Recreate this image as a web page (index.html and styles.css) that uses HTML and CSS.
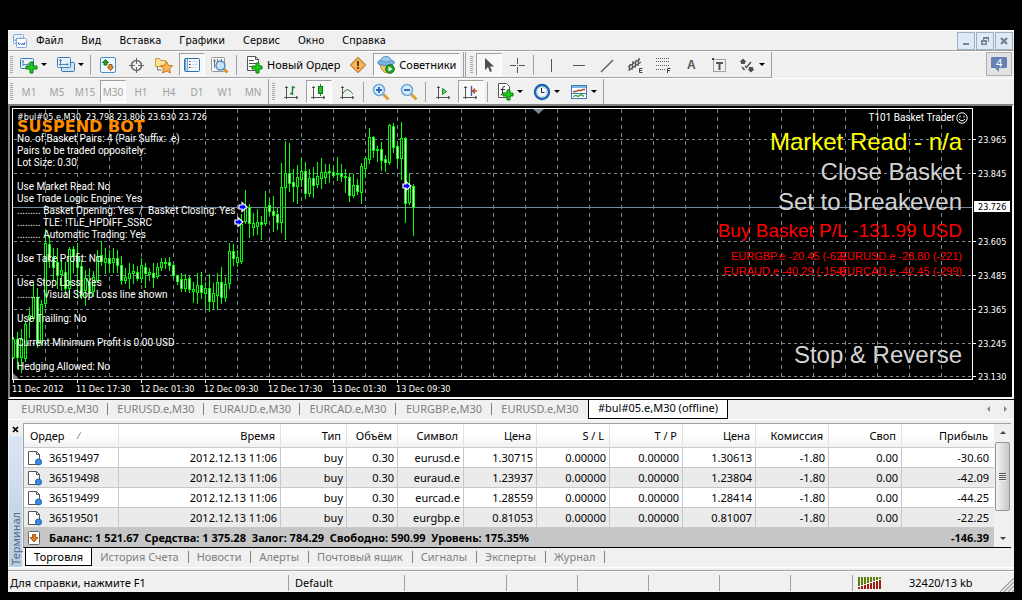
FILE: index.html
```html
<!DOCTYPE html>
<html lang="ru">
<head>
<meta charset="utf-8">
<title>#bul#05.e,M30 (offline)</title>
<link rel="stylesheet" href="styles.css">
</head>
<body>
<div class="app">
  <header class="menubar">
    <svg class="logo" width="16" height="16" viewBox="0 0 16 16"><rect x="1.500" y="1.500" width="10" height="9" rx="1" fill="#e8f2ff" stroke="#7fa6dd"/><path d="M3 8l2-3 2 2 2-3" fill="none" stroke="#4d86d0"/><rect x="4.500" y="5.500" width="10" height="9" rx="1" fill="#fff" stroke="#7fa6dd"/><path d="M6 9l1 3 1.500-2 1.500 2 1-2 1 2 1-3" fill="none" stroke="#4d86d0"/></svg>
    <nav class="menu">
      <button>Файл</button><button>Вид</button><button>Вставка</button><button>Графики</button><button>Сервис</button><button>Окно</button><button>Справка</button>
    </nav>
    <div class="winbtns">
      <button aria-label="Свернуть"><svg width="12" height="12" viewBox="0 0 12 12"><path d="M3 8h6v2H3z" fill="#75869b"/></svg></button>
      <button aria-label="Восстановить"><svg width="12" height="12" viewBox="0 0 12 12"><path d="M4 2h6v5H9V4H5v1H4z" fill="#75869b"/><path d="M2 5h6v5H2zM3.500 7v1.500h3V7z" fill="#75869b" fill-rule="evenodd"/></svg></button>
      <button aria-label="Закрыть"><svg width="12" height="12" viewBox="0 0 12 12"><path d="M3 3l6 6M9 3l-6 6" stroke="#75869b" stroke-width="2.400"/></svg></button>
    </div>
  </header>

  <div class="toolrow">
    <div class="toolbar">
      <i class="grip"></i>
      <button class="tb drop" aria-label="Новый график"><svg width="20" height="20" viewBox="0 0 20 20"><rect x="1.500" y="3.500" width="13" height="10" rx="1" fill="#e6f2fb" stroke="#3d7ab5"/><path d="M4 5v6M3 6.500h2M4 9.500h6M9 8l1.500 1.500" fill="none" stroke="#5a87ad"/><path d="M11 7h3v4h4v3h-4v4h-3v-4H7v-3h4z" fill="#1fd01f" stroke="#087d08"/></svg></button>
      <button class="tb drop" aria-label="Профили"><svg width="20" height="20" viewBox="0 0 20 20"><rect x="5.500" y="7.500" width="13" height="9" rx="1" fill="#cfe3f3" stroke="#3d7ab5"/><rect x="1.500" y="2.500" width="13" height="10" rx="1" fill="#e6f2fb" stroke="#3d7ab5"/><path d="M4.500 4v7M3 5.500h3M3 9.500h9M10.500 8l1.500 1.500-1.500 1.500" fill="none" stroke="#5a87ad"/></svg></button>
      <i class="sep"></i>
      <button class="tb" aria-label="Обзор рынка"><svg width="20" height="20" viewBox="0 0 20 20"><rect x="2.500" y="2.500" width="15" height="15" rx="1.500" fill="#f3f9fd" stroke="#4a90c8"/><path d="M7.500 4.500l3 3H9v2.500H6V7.500H4.500z" fill="#2aa32a" stroke="#157015"/><path d="M11 9.500h3v2.500h1.500l-3 3.500-3-3.500H11z" fill="#e8912d" stroke="#9b5a10"/></svg></button>
      <button class="tb" aria-label="Окно данных"><svg width="20" height="20" viewBox="0 0 20 20"><circle cx="10.500" cy="10.500" r="5" fill="none" stroke="#666" stroke-width="1.600"/><path d="M10.500 3v6M10.500 12v6M3 10.500h6M12 10.500h6" stroke="#666"/></svg></button>
      <button class="tb" aria-label="Избранное"><svg width="20" height="20" viewBox="0 0 20 20"><path d="M1.500 3.500h4l1 2h5v6h-10z" fill="#fbe39a" stroke="#c99a35"/><path d="M3.500 12v3h4" fill="none" stroke="#777"/><path d="M12.500 6.500l1.900 3.800 4.200.500-3 2.900.800 4.300-3.900-2-3.900 2 .800-4.300-3-2.900 4.200-.500z" fill="#f9b556" stroke="#c9781c"/></svg></button>
      <button class="tb on" aria-label="Терминал"><svg width="20" height="20" viewBox="0 0 20 20"><rect x="2.500" y="3.500" width="15" height="13" rx="1" fill="#f4f9fd" stroke="#2e6fae"/><path d="M3 4h3v12H3z" fill="#6aa5dc"/><path d="M4.500 4v12" stroke="#cde3f6"/><path d="M7 6.500h1.500M7 9.500h1.500M7 12.500h1.500" stroke="#333"/><path d="M7 6.500h1" stroke="#d22"/><path d="M10 6.500h6M10 9.500h6M10 12.500h6" stroke="#d3e2ee"/></svg></button>
      <button class="tb" aria-label="Тестер стратегий"><svg width="20" height="20" viewBox="0 0 20 20"><rect x="1.500" y="2.500" width="13" height="14" rx="1" fill="#f7f7f7" stroke="#999"/><path d="M4.500 4v9M7.500 4v4M11.500 4v5M3 6h3" stroke="#777"/><path d="M13.500 13.500l4 4" stroke="#d99330" stroke-width="3"/><circle cx="10.500" cy="10.500" r="4.500" fill="#c4def5" fill-opacity=".9" stroke="#4b8cc8" stroke-width="1.400"/></svg></button>
      <i class="sep"></i>
      <button class="tb text"><svg width="20" height="20" viewBox="0 0 20 20"><path d="M3.500 1.500h8l3 3v11h-11z" fill="#fff" stroke="#555"/><path d="M11.500 1.500v3h3M5 5.500h5M5 8.500h7M5 11.500h4" fill="none" stroke="#555"/><path d="M12 8h3v3h3v3h-3v4h-3v-4H8v-3h4z" fill="#1fd01f" stroke="#087d08"/></svg><span>Новый Ордер</span></button>
      <button class="tb" aria-label="MetaEditor"><svg width="20" height="20" viewBox="0 0 20 20"><path d="M10 2.500l7.500 7.500-7.500 7.500L2.500 10z" fill="#f6b45c" stroke="#c98a3c" stroke-width="1.300" stroke-linejoin="round"/><path d="M9 6h2v5H9zM9 12h2v2H9z" fill="#6b3a08"/></svg></button>
      <button class="tb text on"><svg width="20" height="20" viewBox="0 0 20 20"><path d="M4 9q1 8 7 9l5-4V8z" fill="#f3c56a" stroke="#b98526"/><ellipse cx="10" cy="7.500" rx="8.500" ry="3" fill="#7db4e6" stroke="#4a86c0"/><path d="M5 6q0-4.500 5-4.500T15 6q-5 2-10 0z" fill="#9cc8f0" stroke="#4a86c0" stroke-width=".8"/><circle cx="14" cy="14" r="4.300" fill="#1fa81f" stroke="#0c730c"/><path d="M12.500 11.500l4 2.500-4 2.500z" fill="#fff"/></svg><span>Советники</span></button>
      <i class="edge"></i>
      <i class="grip"></i>
      <button class="tb on" aria-label="Курсор"><svg width="20" height="20" viewBox="0 0 20 20"><path d="M6 3v12l3-3 2 5 2-1-2-4.500h4z" fill="#4d4d4d"/></svg></button>
      <button class="tb" aria-label="Перекрестие"><svg width="20" height="20" viewBox="0 0 20 20"><path d="M10.500 3v6M10.500 12v6M3 10.500h6M12 10.500h6M10 10.500h1" stroke="#555"/></svg></button>
      <i class="sep"></i>
      <button class="tb" aria-label="Вертикальная линия"><svg width="20" height="20" viewBox="0 0 20 20"><path d="M10.500 4v13" stroke="#555"/></svg></button>
      <button class="tb" aria-label="Горизонтальная линия"><svg width="20" height="20" viewBox="0 0 20 20"><path d="M4 10.500h12" stroke="#555"/></svg></button>
      <button class="tb" aria-label="Трендовая линия"><svg width="20" height="20" viewBox="0 0 20 20"><path d="M4 17L16 5" stroke="#555" stroke-width="1.200"/></svg></button>
      <button class="tb" aria-label="Канал"><svg width="20" height="20" viewBox="0 0 20 20"><path d="M3 12L15 4M4 15L16 7M5 9l-1 7M8 6l-1 9M11 5l-1 8M14 3l-1 8" stroke="#555" stroke-width="1.200"/><path d="M17.500 13.500h-3v4h3M14.500 15.500h2.500" fill="none" stroke="#444"/></svg></button>
      <button class="tb" aria-label="Фибоначчи"><svg width="20" height="20" viewBox="0 0 20 20"><path d="M3 3.500h14M3 6.500h14M3 10.500h14M3 14.500h9" stroke="#555" stroke-dasharray="1 1"/><path d="M14.500 18v-4.500h3M14.500 15.500h2.500" fill="none" stroke="#444"/></svg></button>
      <button class="tb glyph" aria-label="Текст">A</button>
      <button class="tb" aria-label="Метка"><svg width="20" height="20" viewBox="0 0 20 20"><rect x="4.500" y="4.500" width="12" height="12" fill="none" stroke="#555" stroke-dasharray="1 1"/><path d="M7 8h7M10.500 8v7" stroke="#555" stroke-width="2"/><path d="M3 3h2v2H3z" fill="#444"/></svg></button>
      <button class="tb drop" aria-label="Стрелки"><svg width="20" height="20" viewBox="0 0 20 20"><path d="M6 3.500L9.500 7H8v2H4V7H2.500zM14 17.500L10.500 14H12v-2h4v2h1.500z" fill="#4d4d4d"/><path d="M5 12l2.500 3M8 11l1.500 1.500L14 7" fill="none" stroke="#4d4d4d" stroke-width="1.400"/></svg></button>
    </div>
    <button class="chat" aria-label="Сообщения: 4"><svg width="18" height="18" viewBox="0 0 18 18"><path d="M1 3q0-1 1-1h14q1 0 1 1v9q0 1-1 1H9v4l-4-4H2q-1 0-1-1z" fill="#6680b3"/></svg><span>4</span></button>
  </div>

  <div class="toolrow second">
    <div class="toolbar">
      <i class="grip"></i>
      <button class="tb tf">M1</button><button class="tb tf">M5</button><button class="tb tf">M15</button><button class="tb tf on">M30</button><button class="tb tf">H1</button><button class="tb tf">H4</button><button class="tb tf">D1</button><button class="tb tf">W1</button><button class="tb tf">MN</button>
      <i class="edge"></i>
      <i class="grip"></i>
      <button class="tb" aria-label="Бары"><svg width="20" height="20" viewBox="0 0 20 20"><path d="M5.500 4v13M3 15.500h14M4 5.500h3M15 14l2 1.500-2 1.500" fill="none" stroke="#555"/><path d="M11.500 4v9M9 11.500h2.500M11.500 5.500H14" stroke="#168a2a" stroke-width="1.400"/></svg></button>
      <button class="tb on" aria-label="Свечи"><svg width="20" height="20" viewBox="0 0 20 20"><path d="M4.500 4v13M2 15.500h14M3 5.500h3M14 14l2 1.500-2 1.500" fill="none" stroke="#555"/><path d="M11.500 2v12" stroke="#168a2a"/><rect x="9.500" y="4.500" width="4" height="7" fill="#24c024" stroke="#0b7a1a"/></svg></button>
      <button class="tb" aria-label="Линия"><svg width="20" height="20" viewBox="0 0 20 20"><path d="M5.500 4v13M3 15.500h14M4 5.500h3M15 14l2 1.500-2 1.500" fill="none" stroke="#555"/><path d="M5 13q4-8 8-4l3 3" fill="none" stroke="#3d7f4c"/></svg></button>
      <i class="sep"></i>
      <button class="tb" aria-label="Увеличить"><svg width="20" height="20" viewBox="0 0 20 20"><path d="M12 12l5.500 5.500" stroke="#d9a13a" stroke-width="3"/><circle cx="8" cy="8" r="5.500" fill="#d6ebfb" stroke="#6aa8e0" stroke-width="1.500"/><path d="M5 8h6M8 5v6" stroke="#2b66b0" stroke-width="1.800"/></svg></button>
      <button class="tb" aria-label="Уменьшить"><svg width="20" height="20" viewBox="0 0 20 20"><path d="M12 12l5.500 5.500" stroke="#d9a13a" stroke-width="3"/><circle cx="8" cy="8" r="5.500" fill="#d6ebfb" stroke="#6aa8e0" stroke-width="1.500"/><path d="M5 8h6" stroke="#2b66b0" stroke-width="1.800"/></svg></button>
      <i class="sep"></i>
      <button class="tb" aria-label="Автопрокрутка"><svg width="20" height="20" viewBox="0 0 20 20"><path d="M5.500 4v13M3 15.500h14M4 5.500h3M15 14l2 1.500-2 1.500" fill="none" stroke="#555"/><path d="M9.500 6.500l4 3-4 3z" fill="#6cd06c" stroke="#168a2a"/></svg></button>
      <button class="tb on" aria-label="Сдвиг графика"><svg width="20" height="20" viewBox="0 0 20 20"><path d="M4.500 4v13M2 15.500h14M3 5.500h3M14 14l2 1.500-2 1.500" fill="none" stroke="#555"/><path d="M10.500 4v10" stroke="#2b66b0" stroke-width="1.400"/><path d="M16 9H12M14 6.500L11.500 9l2.500 2.500" fill="none" stroke="#c4471c" stroke-width="1.300"/></svg></button>
      <i class="sep"></i>
      <button class="tb drop" aria-label="Индикаторы"><svg width="20" height="20" viewBox="0 0 20 20"><path d="M3.500 1.500h8l3 3v11h-11z" fill="#fff" stroke="#555"/><path d="M10 4.500Q7.500 4 7.500 7v4q0 2-2 2M5.500 7.500H10" fill="none" stroke="#333"/><path d="M12 8h3v3h3v3h-3v4h-3v-4H8v-3h4z" fill="#1fd01f" stroke="#087d08"/></svg></button>
      <button class="tb drop" aria-label="Периоды"><svg width="20" height="20" viewBox="0 0 20 20"><circle cx="10" cy="10" r="7" fill="#f3f9ff" stroke="#1e62b0" stroke-width="2.400"/><circle cx="10" cy="10" r="4.800" fill="none" stroke="#89a" stroke-dasharray="1 1.500"/><path d="M9.500 6v4.500h3" fill="none" stroke="#222"/></svg></button>
      <button class="tb drop" aria-label="Шаблоны"><svg width="20" height="20" viewBox="0 0 20 20"><rect x="2.500" y="3.500" width="15" height="13" fill="#fff" stroke="#3d7ab5"/><path d="M3 4h14v2H3z" fill="#7fb2e0"/><path d="M3 11.500h14" stroke="#3d7ab5"/><path d="M4 9.500h3l2-1h3l2-1h2" fill="none" stroke="#a0441c" stroke-width="1.300"/><path d="M4 14.500l3-1 2 1 3-2 3 2" fill="none" stroke="#1f9a2f" stroke-width="1.300"/></svg></button>
    </div>
  </div>

  <main class="chart">
    <svg id="plot" class="plot" viewBox="10 106 1002 291" preserveAspectRatio="xMinYMin meet"></svg>
    <div class="overlay">
      <div class="info">
        <div class="quote">#bul#05.e,M30  23.798 23.806 23.630 23.726</div>
        <div class="bot">SUSPEND BOT</div>
        <pre class="comment">No. of Basket Pairs: 4 (Pair Suffix: .e)
Pairs to be traded oppositely:
Lot Size: 0.30

Use Market Read: No
Use Trade Logic Engine: Yes
......... Basket Opening: Yes  /  Basket Closing: Yes
......... TLE: !TLE_HPDIFF_SSRC
......... Automatic Trading: Yes

Use Take Profit: No

Use Stop Loss: Yes
......... Visual Stop Loss line shown

Use Trailing: No

Current Minimum Profit is 0.00 USD

Hedging Allowed: No</pre>
      </div>
      <div class="actions">
        <div class="expert">T101 Basket Trader<svg width="12" height="12" viewBox="0 0 12 12"><circle cx="6" cy="6" r="5.200" fill="none" stroke="#fff"/><path d="M4 3.500v2M8 3.500v2M3 7q3 3.500 6 0" fill="none" stroke="#fff"/></svg></div>
        <div class="big yellow">Market Read - n/a</div>
        <div class="big">Close Basket</div>
        <div class="big">Set to Breakeven</div>
        <div class="pl">Buy Basket P/L -131.99 USD</div>
        <div class="pairs"><span class="lead">EURGBP.e -20.45 (-62)</span><span>EURUSD.e -28.80 (-221)</span></div>
        <div class="pairs"><span class="lead">EURAUD.e -40.29 (-154)</span><span>EURCAD.e -42.45 (-299)</span></div>
        <div class="big reverse">Stop &amp; Reverse</div>
      </div>
    </div>
  </main>

  <div class="charttabs">
    <button>EURUSD.e,M30</button><button>EURUSD.e,M30</button><button>EURAUD.e,M30</button><button>EURCAD.e,M30</button><button>EURGBP.e,M30</button><button>EURUSD.e,M30</button><button class="active">#bul#05.e,M30 (offline)</button>
    <svg class="scroll" width="24" height="8" viewBox="0 0 24 8"><path d="M4 1v6L1 4zM18 1v6l3-3z" fill="#8a8a8a"/></svg>
  </div>

  <section class="terminal">
    <aside class="side">
      <button class="close" aria-label="Закрыть терминал"><svg width="7" height="7" viewBox="0 0 7 7"><path d="M1 1l5 5M6 1L1 6" stroke="#000" stroke-width="1.700"/></svg></button>
      <div class="caption"><span>Терминал</span></div>
    </aside>
    <div class="panel">
      <div class="tablewrap">
        <table class="orders">
          <colgroup><col class="c-order"><col class="c-time"><col class="c-sym"><col class="c-vol"><col class="c-sym"><col class="c-num"><col class="c-num"><col class="c-num"><col class="c-num"><col class="c-num"><col class="c-num"><col></colgroup>
          <thead><tr><th>Ордер<svg class="sort" width="10" height="8" viewBox="0 0 10 8"><path d="M1 7L5 0" stroke="#888"/><path d="M5 0l4 7.500H1" fill="none" stroke="#fff"/></svg></th><th>Время</th><th>Тип</th><th>Объём</th><th>Символ</th><th>Цена</th><th>S / L</th><th>T / P</th><th>Цена</th><th>Комиссия</th><th>Своп</th><th>Прибыль</th></tr></thead>
          <tbody>
            <tr><td><svg class="doc" width="16" height="16" viewBox="0 0 16 16"><path d="M1.500 1.500h8l3 3v10h-11z" fill="#fff" stroke="#555"/><path d="M9.500 1.500v3h3" fill="none" stroke="#555"/><circle cx="11.500" cy="12" r="3" fill="#3b8ee0" stroke="#1c5ea8"/></svg>36519497</td><td>2012.12.13 11:06</td><td>buy</td><td>0.30</td><td>eurusd.e</td><td>1.30715</td><td>0.00000</td><td>0.00000</td><td>1.30613</td><td>-1.80</td><td>0.00</td><td>-30.60</td></tr>
            <tr><td><svg class="doc" width="16" height="16" viewBox="0 0 16 16"><path d="M1.500 1.500h8l3 3v10h-11z" fill="#fff" stroke="#555"/><path d="M9.500 1.500v3h3" fill="none" stroke="#555"/><circle cx="11.500" cy="12" r="3" fill="#3b8ee0" stroke="#1c5ea8"/></svg>36519498</td><td>2012.12.13 11:06</td><td>buy</td><td>0.30</td><td>euraud.e</td><td>1.23937</td><td>0.00000</td><td>0.00000</td><td>1.23804</td><td>-1.80</td><td>0.00</td><td>-42.09</td></tr>
            <tr><td><svg class="doc" width="16" height="16" viewBox="0 0 16 16"><path d="M1.500 1.500h8l3 3v10h-11z" fill="#fff" stroke="#555"/><path d="M9.500 1.500v3h3" fill="none" stroke="#555"/><circle cx="11.500" cy="12" r="3" fill="#3b8ee0" stroke="#1c5ea8"/></svg>36519499</td><td>2012.12.13 11:06</td><td>buy</td><td>0.30</td><td>eurcad.e</td><td>1.28559</td><td>0.00000</td><td>0.00000</td><td>1.28414</td><td>-1.80</td><td>0.00</td><td>-44.25</td></tr>
            <tr><td><svg class="doc" width="16" height="16" viewBox="0 0 16 16"><path d="M1.500 1.500h8l3 3v10h-11z" fill="#fff" stroke="#555"/><path d="M9.500 1.500v3h3" fill="none" stroke="#555"/><circle cx="11.500" cy="12" r="3" fill="#3b8ee0" stroke="#1c5ea8"/></svg>36519501</td><td>2012.12.13 11:06</td><td>buy</td><td>0.30</td><td>eurgbp.e</td><td>0.81053</td><td>0.00000</td><td>0.00000</td><td>0.81007</td><td>-1.80</td><td>0.00</td><td>-22.25</td></tr>
          </tbody>
          <tfoot><tr><td colspan="11"><svg class="doc" width="16" height="16" viewBox="0 0 16 16"><rect x="1.500" y="1.500" width="11" height="13" rx="1" fill="#fff" stroke="#666"/><path d="M5.500 4.500h3v3h2.500L7 12 3 7.500h2.500z" fill="#e8791c" stroke="#8a3f08" stroke-width=".8"/></svg>Баланс: 1 521.67&nbsp; Средства: 1 375.28&nbsp; Залог: 784.29&nbsp; Свободно: 590.99&nbsp; Уровень: 175.35%</td><td>-146.39</td></tr></tfoot>
        </table>
        <div class="vscroll"><i class="up"></i><div class="track"><div class="thumb"><i></i></div></div><i class="down"></i></div>
      </div>
      <div class="termtabs">
        <button class="active">Торговля</button><button>История Счета</button><button>Новости</button><button>Алерты</button><button>Почтовый ящик</button><button>Сигналы</button><button>Эксперты</button><button>Журнал</button>
      </div>
    </div>
  </section>

  <footer class="status">
    <span class="s-help">Для справки, нажмите F1</span><span class="s-profile">Default</span><span class="s-wide"></span><span class="s-cell"></span><span class="s-cell"></span><span class="s-cell"></span><span class="s-cell"></span><span class="s-fill"></span>
    <span class="s-net"><svg width="24" height="12" viewBox="0 0 24 12"><path d="M0 0h2v9H0zM3 0h2v8H3zM6 0h2v7H6zM9 0h2v6H9zM12 0h2v5h-2zM15 0h2v4h-2zM18 0h2v3h-2zM21 0h2v2h-2z" fill="#5f7d0c"/><path d="M0 10h2v2H0zM3 9h2v3H3zM6 8h2v4H6zM9 7h2v5H9zM12 6h2v6h-2zM15 5h2v7h-2zM18 4h2v8h-2zM21 3h2v9h-2z" fill="#9c2010"/></svg>32420/13 kb</span>
    <svg class="sizegrip" width="14" height="14" viewBox="0 0 14 14"><path d="M0 14L14 0M4 14L14 4M8 14l6-6M12 14l2-2" stroke="#999" stroke-width="1.200"/></svg>
  </footer>
</div>
<script src="chart.js"></script>
</body>
</html>
```
FILE: styles.css
```css
* { box-sizing: border-box; }
:root {
  --face: #f0f0f0;
  --line: #a0a0a0;
  --ui: "Noto Sans", "DejaVu Sans", sans-serif;
  --chart: "DejaVu Sans Condensed", "DejaVu Sans", sans-serif;
  --comment: Roboto, "Liberation Sans", sans-serif;
  --label: "Liberation Sans", Arial, sans-serif;
}
body { margin: 0; padding: 30px 8px 8px; background: #000; font: 11px/14px var(--ui); color: #000; }
button { font: inherit; color: inherit; background: none; border: 0; padding: 0; margin: 0; white-space: nowrap; }
svg { display: block; flex: none; }
.app { display: flex; flex-direction: column; background: var(--face); }

/* menu */
.menubar { display: flex; align-items: center; height: 21px; padding-left: 4px; border-top: 1px solid #fff; border-bottom: 1px solid var(--line); }
.menu { display: flex; flex: 1; gap: 18px; padding-left: 8px; font-family: var(--chart); }
.winbtns { display: flex; gap: 1px; padding-right: 1px; }
.winbtns button { display: grid; place-items: center; width: 18px; height: 18px; border: 1px solid #9db0c6; background: #dfeaf6; }

/* toolbars */
.toolrow { display: flex; justify-content: space-between; height: 27px; border-top: 1px solid #fff; padding-right: 2px; }
.second { height: 26px; }
.toolbar { display: flex; align-items: center; padding: 0 2px; border-right: 1px solid var(--line); border-bottom: 1px solid var(--line); }
.second .toolbar { border-bottom: 0; }
.grip { width: 3px; height: 18px; margin-right: 2px; background: repeating-linear-gradient(#a8a8a8 0 1px, #f0f0f0 1px 2px); }
.sep { width: 1px; height: 20px; margin: 0 3px 0 2px; background: var(--line); }
.edge { width: 3px; height: 25px; margin: 0 4px 0 2px; border-left: 1px solid var(--line); border-right: 1px solid var(--line); }
.second .edge { width: 1px; margin: 0 3px 0 1px; border-right: 0; }
.tb { display: flex; align-items: center; justify-content: center; width: 28px; height: 23px; }
.tb.on { width: 26px; margin: 0 1px; border: 1px solid; border-color: #a0a0a0 #fff #fff #a0a0a0; background: #f8f8f8; }
.tb.drop { width: 36px; gap: 2px; }
.tb.drop + .tb.drop { width: 37px; }
.tb.drop::after { content: ""; border: 3px solid transparent; border-top-color: #000; border-bottom: 0; }
.tb.text { width: auto; padding: 0 4px; gap: 3px; }
.tb.text.on { width: auto; padding: 0 3px 0 2px; }
.tb.glyph { font: bold 12px/14px var(--label); color: #555; }
.tb.tf { color: #a0a0a0; font-size: 10px; }
.chat { position: relative; display: grid; place-items: center; width: 26px; height: 24px; border: 1px solid #b0b0b0; background: #e2e2e2; }
.chat span { position: absolute; top: 3px; left: 9px; font: 11px/14px var(--ui); color: #fff; }

/* chart */
.chart { position: relative; background: #000; border: solid; border-width: 2px; border-color: #808080 #f8f8f8 #f8f8f8 #808080; }
.plot { width: 100%; height: auto; }
.axis { font: 9px var(--chart); fill: #fff; }
.axis.now { fill: #000; }
.overlay { position: absolute; inset: 0 40px 0 0; display: flex; justify-content: space-between; padding: 5px 10px 0 7px; color: #fff; }
.info { font: 9px/12px var(--chart); }
.quote { white-space: pre; }
.bot { height: 10px; font: bold 16px/8px "DejaVu Sans", sans-serif; color: #ff8c00; }
.comment { margin: 0; font: 10px/12px var(--comment); }
.actions { display: flex; flex-direction: column; align-items: flex-end; font-family: var(--label); color: #d3d3d3; }
.expert { display: flex; align-items: center; gap: 1px; margin-right: -6px; font: 10px/14px var(--comment); color: #fff; }
.big { font-size: 24px; line-height: 30px; }
.yellow { color: #ff0; padding-top: 2px; }
.pl { margin-bottom: 4px; font-size: 19px; line-height: 28px; color: #f00; }
.pairs { display: flex; font-size: 11px; line-height: 15px; color: #f00; }
.pairs .lead { margin-right: -6px; }
.reverse { margin-top: 61px; }

/* chart tabs */
.charttabs { display: flex; height: 21px; border-top: 1px solid #000; border-bottom: 1px solid #fff; padding-left: 4px; color: #808080; }
.charttabs button { position: relative; width: 96px; height: 17px; }
.charttabs button::after { content: ""; position: absolute; right: 0; top: 3px; height: 12px; border-right: 1px solid #808080; }
.charttabs .active { width: 140px; height: 19px; padding-bottom: 2px; background: #fff; border: 1px solid #000; border-top: 0; color: #000; }
.charttabs .active::after, .charttabs button:nth-last-of-type(2)::after { display: none; }
.scroll { margin: 5px 4px 0 auto; }

/* terminal */
.terminal { display: flex; padding: 3px 3px 0 0; border-bottom: 1px solid #fff; }
.side { display: flex; flex-direction: column; width: 15px; padding-left: 1px; }
.close { display: grid; place-items: center; width: 13px; height: 13px; }
.caption { flex: 1; width: 13px; display: flex; align-items: flex-end; justify-content: center; background: linear-gradient(#dbe7f3, #b9cbe0); }
.caption span { writing-mode: vertical-rl; transform: rotate(180deg); line-height: 13px; color: #566b84; padding-top: 2px; }
.panel { flex: 1; min-width: 0; }
.tablewrap { display: flex; border-top: 1px solid var(--line); border-left: 1px solid var(--line); border-bottom: 1px solid #000; }
.orders { flex: 1; border-collapse: separate; border-spacing: 0; table-layout: fixed; width: 100%; background: #fff; }
.c-order { width: 95px; }
.c-time { width: 162px; }
.c-sym { width: 66px; }
.c-vol { width: 51px; }
.c-num { width: 73px; }
th, td { padding: 0 3px 0 0; text-align: right; white-space: nowrap; overflow: hidden; }
th { height: 24px; padding-right: 5px; font-weight: normal; background: linear-gradient(#fff 50%, #f0f1f3); border-right: 1px solid #e2e2e2; border-bottom: 1px solid #c8c8c8; }
td { height: 20px; border-right: 1px solid #c8c8c8; border-bottom: 1px solid #c8c8c8; }
th:first-child { text-align: left; padding-left: 6px; }
td:first-child { text-align: left; }
tbody tr:nth-child(even) { background: #ebebeb; }
td:last-child { padding-right: 5px; border-right: 0; }
th:last-child { padding-right: 6px; border-right: 0; }
tfoot td { height: 19px; background: #c6c6c6; border: 0; font-weight: bold; }
.sort { display: inline-block; margin-left: 12px; }
.doc { display: inline-block; margin: 0 6px 0 3px; vertical-align: -4px; }
.vscroll { display: flex; flex-direction: column; align-items: center; width: 17px; padding: 7px 1px; background: var(--face); }
.up { border: 3px solid transparent; border-bottom-color: #444; border-top: 0; }
.down { border: 3px solid transparent; border-top-color: #444; border-bottom: 0; }
.track { flex: 1; width: 100%; padding-top: 8px; }
.thumb { display: grid; place-items: center; height: 69px; border: 1px solid #979797; border-radius: 2px; background: linear-gradient(90deg, #f4f4f4, #c8c8c8); }
.thumb i { width: 7px; height: 8px; background: repeating-linear-gradient(#555 0 1px, #eee 1px 2px); }
.termtabs { display: flex; height: 19px; padding-left: 2px; color: #808080; }
.termtabs button { position: relative; height: 18px; padding: 0 10px 0 8px; }
.termtabs button::after { content: ""; position: absolute; right: 0; top: 3px; height: 12px; border-right: 1px solid #808080; }
.termtabs .active { padding: 0 8px; background: #fff; border: 1px solid #000; border-top: 0; color: #000; }
.termtabs .active::after { display: none; }

/* status bar */
.status { display: flex; align-items: center; height: 22px; margin-top: 2px; border-top: 1px solid var(--line); box-shadow: inset 0 1px #fff; }
.status span { display: flex; align-items: center; height: 16px; margin-top: 2px; border-right: 1px solid var(--line); }
.status .s-help { width: 281px; padding-left: 2px; }
.status .s-profile { width: 116px; padding-left: 6px; }
.status .s-wide { width: 102px; }
.status .s-cell { width: 71px; }
.status .s-fill { flex: 1; }
.status .s-net { width: 147px; padding-left: 5px; gap: 27px; border-right: 0; }
.sizegrip { align-self: flex-end; }
```
FILE: chart.js
```js
// Candles, one every four units: [high, body top, body bottom, low, falling]
const candles = [
  [337,339,357,358,0],[332,339,357,368,1],[329,339,357,372,0],[322,324,358,361,0],[307,315,319,337,0],
  [283,297,318,320,0],[288,297,343,347,1],[300,304,342,344,0],[229,243,303,307,0],[235,244,257,267,1],
  [248,257,267,280,1],[248,262,275,288,1],[260,270,274,290,0],[262,272,288,293,1],[247,249,288,298,0],
  [246,249,256,272,1],[243,256,267,298,1],[260,266,295,298,1],[270,278,290,305,0],[268,282,293,297,1],
  [271,277,291,296,0],[250,256,280,282,0],[241,255,261,265,1],[248,258,262,273,0],[250,258,263,272,1],
  [248,258,262,272,0],[250,258,265,272,1],[256,265,280,284,1],[268,277,280,283,0],[263,273,278,288,0],
  [264,271,273,283,0],[266,272,278,280,1],[258,265,278,282,0],[263,267,273,287,1],[268,272,274,280,0],
  [263,273,277,287,1],[263,267,276,278,0],[258,262,267,270,0],[258,262,263,268,0],[257,262,265,270,1],
  [264,265,275,278,1],[275,275,281,284,1],[273,279,288,291,1],[274,279,288,291,0],[276,278,289,292,1],
  [282,289,291,302,0],[273,285,292,303,0],[272,285,292,298,1],[282,288,293,308,0],[274,288,301,311,1],
  [283,293,301,308,0],[273,282,295,309,0],[267,282,297,303,1],[277,284,297,301,0],[243,251,283,288,0],
  [244,251,258,265,1],[250,257,262,266,0],[214,224,261,263,0],[190,207,221,223,0],[204,207,223,237,1],
  [213,223,227,235,0],[209,222,226,234,0],[216,222,224,239,1],[191,207,223,225,0],[199,205,211,215,1],
  [196,211,215,231,1],[208,214,222,229,1],[163,187,222,232,0],[141,173,187,239,0],[143,173,183,191,1],
  [169,182,186,201,1],[165,177,186,203,0],[158,171,179,186,0],[162,171,193,198,1],[169,178,193,196,0],
  [167,178,185,197,1],[162,176,184,187,0],[158,172,178,188,0],[164,172,177,183,0],[164,171,172,182,0],
  [167,172,175,177,1],[157,173,174,180,0],[164,173,176,181,1],[169,176,177,192,0],[173,177,195,201,1],
  [174,185,195,197,0],[179,185,191,194,1],[163,166,192,203,0],[156,158,168,177,0],[128,137,159,163,0],
  [136,137,150,157,1],[146,149,150,161,0],[142,149,160,170,1],[155,159,162,171,1],[124,125,162,164,0],
  [123,126,147,152,1],[142,146,158,165,1],[122,138,158,179,0],[137,138,203,222,1],[173,187,202,204,0],
  [184,186,207,235,1]
];
const prices = [[139,"23.965"],[173,"23.845"],[241,"23.605"],[275,"23.485"],[309,"23.365"],[343,"23.245"],[376,"23.130"]];
const times = ["11 Dec 2012","11 Dec 17:30","12 Dec 01:30","12 Dec 09:30","12 Dec 17:30","13 Dec 01:30","13 Dec 09:30"];
const arrows = [[238,222],[242,207],[406,186]];

const out = [];
const line = (x1, y1, x2, y2, color, extra = "") =>
  out.push(`<path d="M${x1} ${y1}L${x2} ${y2}" stroke="${color}" ${extra}/>`);

for (let x = 45; x < 972; x += 32) line(x + 0.5, 109, x + 0.5, 379, "#778899", 'stroke-dasharray="4 4"');
for (const [y] of prices) line(14, y + 0.5, 972, y + 0.5, "#778899", 'stroke-dasharray="3 3"');
line(13, 207.5, 972, 207.5, "#778899");
out.push('<path d="M533 109h11l-5.500 5zM13 373v6h6z" fill="#778899"/>');
out.push('<rect x="12.5" y="108.5" width="960" height="271" fill="none" stroke="#fff"/>');

candles.forEach(([high, top, bottom, low, falling], i) => {
  const x = 13 + 4 * i;
  line(x + 0.5, high, x + 0.5, low + 1, "#0f0");
  out.push(`<rect x="${x - 0.5}" y="${top + 0.5}" width="2" height="${bottom - top}" fill="${falling ? "#fff" : "#000"}" stroke="#0f0"/>`);
});
for (const [x, y] of arrows)
  out.push(`<path d="M${x - 3} ${y - 2}h3v-2.500l5 4.500-5 4.500v-2.500h-3z" fill="#00f" stroke="#fff" stroke-width="1.200"/>`);

for (const [y, text] of prices) {
  line(972, y + 0.5, 976, y + 0.5, "#fff");
  out.push(`<text class="axis" x="978" y="${y + 4}">${text}</text>`);
}
out.push('<rect x="974" y="201" width="36" height="11" fill="#fff"/><text class="axis now" x="978" y="210">23.726</text>');
times.forEach((text, i) => {
  line(13.5 + 64 * i, 379, 13.5 + 64 * i, 383, "#fff");
  out.push(`<text class="axis" x="${12 + 64 * i}" y="392">${text}</text>`);
});
document.getElementById("plot").innerHTML = out.join("");
```
